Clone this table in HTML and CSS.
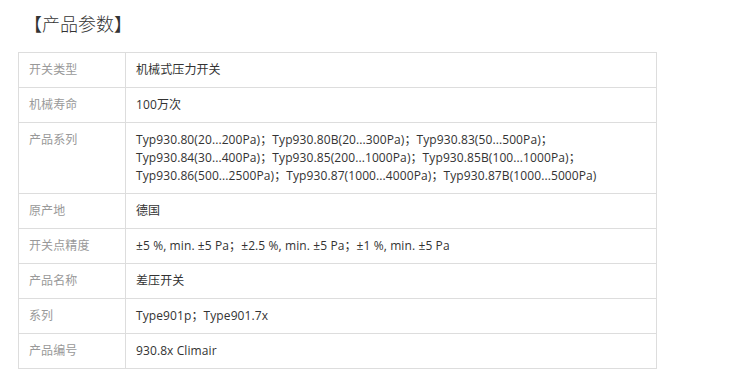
FILE: index.html
```html
<!DOCTYPE html>
<html lang="zh">
<head>
<meta charset="utf-8">
<link rel="stylesheet" href="styles.css">
</head>
<body>
<div class="page">
  <h2 class="title">【产品参数】</h2>
  <table class="params">
    <tr><td class="k">开关类型</td><td class="v">机械式压力开关</td></tr>
    <tr><td class="k">机械寿命</td><td class="v">100万次</td></tr>
    <tr><td class="k">产品系列</td><td class="v">Typ930.80(20...200Pa)；Typ930.80B(20...300Pa)；Typ930.83(50...500Pa)；<br>Typ930.84(30...400Pa)；Typ930.85(200...1000Pa)；Typ930.85B(100...1000Pa)；<br>Typ930.86(500...2500Pa)；Typ930.87(1000...4000Pa)；Typ930.87B(1000...5000Pa)</td></tr>
    <tr><td class="k">原产地</td><td class="v">德国</td></tr>
    <tr><td class="k">开关点精度</td><td class="v">±5 %, min. ±5 Pa；±2.5 %, min. ±5 Pa；±1 %, min. ±5 Pa</td></tr>
    <tr><td class="k">产品名称</td><td class="v">差压开关</td></tr>
    <tr><td class="k">系列</td><td class="v">Type901p；Type901.7x</td></tr>
    <tr><td class="k">产品编号</td><td class="v">930.8x Climair</td></tr>
  </table>
</div>
</body>
</html>
```
FILE: styles.css
```css
html, body {
  margin: 0;
  padding: 0;
  background: #fff;
}
body {
  font-family: "Open Sans", "Noto Sans CJK SC", sans-serif;
  color: #333;
}
.page {
  padding: 10px 0 0 18px;
}
.title {
  margin: 0 0 16px 6px;
  font-size: 18px;
  font-weight: 300;
  line-height: 26px;
  color: #333;
  font-family: "Noto Sans CJK SC", sans-serif;
}
.params {
  border-collapse: collapse;
  width: 639px;
  font-size: 12px;
  letter-spacing: 0.1px;
}
.params td {
  border: 1px solid #ddd;
  padding: 8px 10px;
  line-height: 18px;
  vertical-align: top;
}
.params td.k {
  width: 86px;
  color: #999;
}
.params td.v {
  color: #333;
}
```
